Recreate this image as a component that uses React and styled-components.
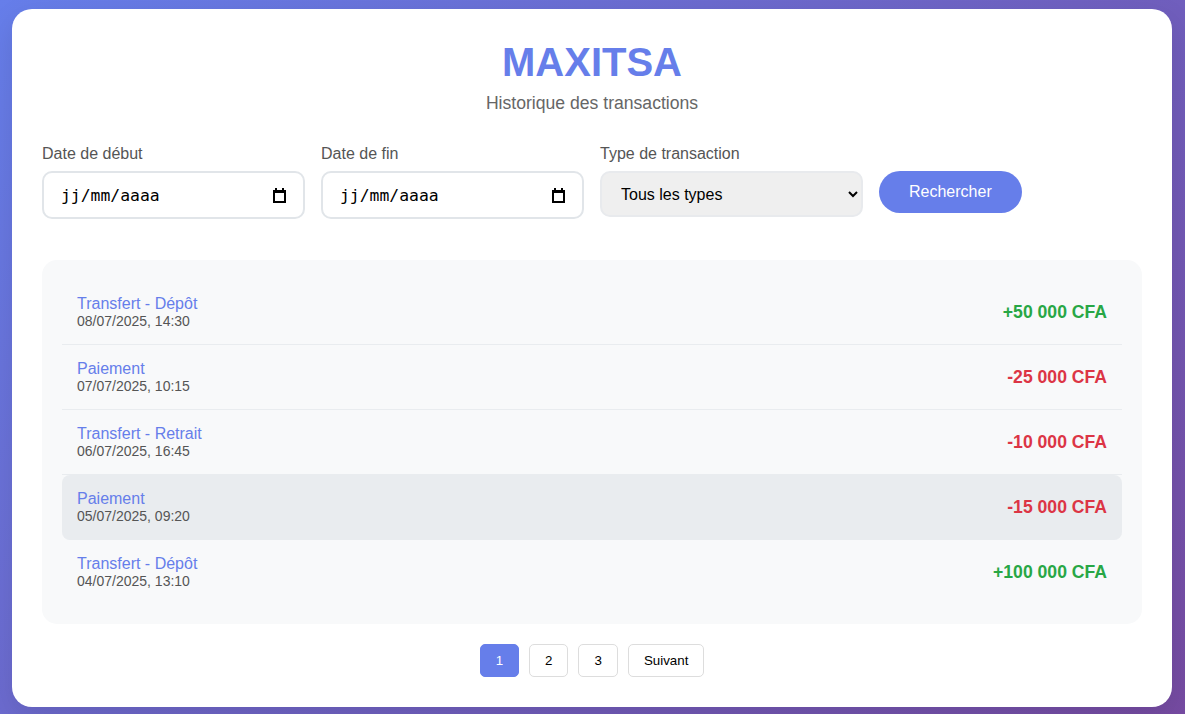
import React from "react";
import styled, { createGlobalStyle } from "styled-components";

const GlobalStyle = createGlobalStyle`
* { box-sizing: border-box; }
html, body { margin: 0; padding: 0; }
body {
  font-family: "Liberation Sans", Arial, sans-serif;
  background: linear-gradient(135deg, #667eea 0%, #764ba2 100%);
  min-height: 100vh;
  padding: 9px 13px 7px 12px;
}
`

const Card = styled.div`
  background: #fff;
  border-radius: 20px;
  padding: 30px;
  box-shadow: 0 10px 30px rgba(0, 0, 0, 0.1);
`

const Header = styled.div`
  text-align: center;
  margin-bottom: 32px;
  h1 {
    margin: 0 0 8px;
    font-size: 40px;
    font-weight: bold;
    color: #667eea;
    line-height: 46px;
  }
  p {
    margin: 0;
    font-size: 17.6px;
    line-height: 20px;
    color: #666;
  }
`

const Filters = styled.div`
  display: grid;
  grid-template-columns: repeat(4, 1fr);
  gap: 16px;
  margin-bottom: 41px;
`

const FilterGroup = styled.div`
  display: flex;
  flex-direction: column;
  label {
    font-size: 16px;
    line-height: 18px;
    color: #555;
    margin-bottom: 8px;
  }
`

const DateField = styled.div`
  height: 48px;
  border: 2px solid #e1e5e9;
  border-radius: 10px;
  padding: 0 17px;
  display: flex;
  align-items: center;
  justify-content: space-between;
  font-family: "DejaVu Sans Mono", monospace;
  font-size: 16.4px;
  color: #000;
  background: #fff;
`

const Select = styled.select`
  height: 46px;
  border: 2px solid #e8eaed;
  border-radius: 10px;
  padding: 0 15px;
  font-family: "Liberation Sans", Arial, sans-serif;
  font-size: 16px;
  color: #000;
  background: #efefef;
  outline: none;
`

const SearchButton = styled.button`
  justify-self: start;
  align-self: start;
  margin-top: 26px;
  height: 42px;
  padding: 0 30px;
  border: none;
  border-radius: 25px;
  background: #667eea;
  color: #fff;
  font-family: "Liberation Sans", Arial, sans-serif;
  font-size: 16px;
  cursor: pointer;
`

const ListPanel = styled.div`
  background: #f8f9fa;
  border-radius: 15px;
  padding: 20px;
  margin-bottom: 20px;
`

const Row = styled.div`
  display: flex;
  align-items: center;
  justify-content: space-between;
  padding: 15px;
  border-bottom: 1px solid #e9ecef;
  background: ${(p) => (p.$active ? "#e9ecef" : "transparent")};
  border-radius: ${(p) => (p.$active ? "8px" : "0")};
  &:last-child { border-bottom: none; }
`

const Info = styled.div`
  display: flex;
  flex-direction: column;
`

const Type = styled.div`
  font-size: 16px;
  line-height: 18px;
  color: #667eea;
`

const When = styled.div`
  font-size: 14px;
  line-height: 16px;
  color: #555;
`

const Amount = styled.div`
  font-size: 17.6px;
  font-weight: bold;
  color: ${(p) => (p.$positive ? "#28a745" : "#dc3545")};
`

const Pagination = styled.div`
  display: flex;
  justify-content: center;
  gap: 10px;
`

const PageButton = styled.button`
  height: 33px;
  padding: 0 15px;
  border: 1px solid ${(p) => (p.$active ? "#667eea" : "#ddd")};
  border-radius: 5px;
  background: ${(p) => (p.$active ? "#667eea" : "#fff")};
  color: ${(p) => (p.$active ? "#fff" : "#000")};
  font-family: "Liberation Sans", Arial, sans-serif;
  font-size: 13.33px;
  cursor: pointer;
`

const CalendarIcon = () => (
  <svg width="13" height="15" viewBox="0 0 13 15">
    <rect x="2" y="0" width="2" height="3" fill="#000" />
    <rect x="9" y="0" width="2" height="3" fill="#000" />
    <rect x="0" y="2" width="13" height="3" fill="#000" />
    <rect x="1" y="3" width="11" height="11" fill="none" stroke="#000" strokeWidth="2" />
  </svg>
);

const transactions = [
  { type: "Transfert - Dépôt", date: "08/07/2025, 14:30", amount: "+50 000 CFA", positive: true },
  { type: "Paiement", date: "07/07/2025, 10:15", amount: "-25 000 CFA", positive: false },
  { type: "Transfert - Retrait", date: "06/07/2025, 16:45", amount: "-10 000 CFA", positive: false },
  { type: "Paiement", date: "05/07/2025, 09:20", amount: "-15 000 CFA", positive: false, active: true },
  { type: "Transfert - Dépôt", date: "04/07/2025, 13:10", amount: "+100 000 CFA", positive: true },
];

export default function App() {
  return (
    <>
      <GlobalStyle />
      <Card>
        <Header>
          <h1>MAXITSA</h1>
          <p>Historique des transactions</p>
        </Header>
        <Filters>
          <FilterGroup>
            <label>Date de début</label>
            <DateField>
              <span>jj/mm/aaaa</span>
              <CalendarIcon />
            </DateField>
          </FilterGroup>
          <FilterGroup>
            <label>Date de fin</label>
            <DateField>
              <span>jj/mm/aaaa</span>
              <CalendarIcon />
            </DateField>
          </FilterGroup>
          <FilterGroup>
            <label>Type de transaction</label>
            <Select defaultValue="all">
              <option value="all">Tous les types</option>
              <option value="depot">Dépôt</option>
              <option value="retrait">Retrait</option>
              <option value="paiement">Paiement</option>
            </Select>
          </FilterGroup>
          <SearchButton>Rechercher</SearchButton>
        </Filters>
        <ListPanel>
          {transactions.map((t, i) => (
            <Row key={i} $active={t.active}>
              <Info>
                <Type>{t.type}</Type>
                <When>{t.date}</When>
              </Info>
              <Amount $positive={t.positive}>{t.amount}</Amount>
            </Row>
          ))}
        </ListPanel>
        <Pagination>
          <PageButton $active>1</PageButton>
          <PageButton>2</PageButton>
          <PageButton>3</PageButton>
          <PageButton>Suivant</PageButton>
        </Pagination>
      </Card>
    </>
  );
}
